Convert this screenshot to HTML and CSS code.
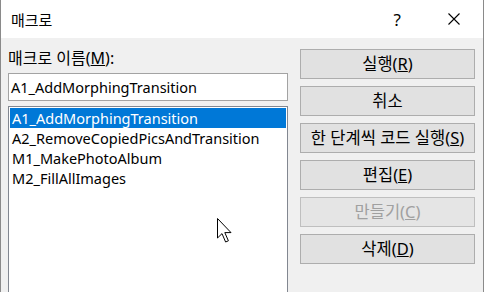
FILE: index.html
```html
<!DOCTYPE html>
<html lang="ko">
<head>
  <meta charset="UTF-8" />
  <title>매크로</title>
  <link rel="stylesheet" href="styles.css">
</head>
<body>

  <div class="dialog">
    <div class="titlebar">
      <span class="title">매크로</span>
      <span class="help">?</span>
      <svg class="close" width="12" height="12" viewBox="0 0 12 12">
        <path d="M0.5 0.5 L11.5 11.5 M11.5 0.5 L0.5 11.5" stroke="#000" stroke-width="1.1" fill="none"/>
      </svg>
    </div>

    <div class="content">
      <div class="left">
        <div class="label">매크로 이름(<u>M</u>):</div>
        <div class="name-box">A1_AddMorphingTransition</div>
        <ul class="macro-list">
          <li class="selected">A1_AddMorphingTransition</li>
          <li>A2_RemoveCopiedPicsAndTransition</li>
          <li>M1_MakePhotoAlbum</li>
          <li>M2_FillAllImages</li>
        </ul>
      </div>

      <div class="buttons">
        <div class="btn">실행(<u>R</u>)</div>
        <div class="btn">취소</div>
        <div class="btn">한 단계씩 코드 실행(<u>S</u>)</div>
        <div class="btn">편집(<u>E</u>)</div>
        <div class="btn disabled">만들기(<u>C</u>)</div>
        <div class="btn">삭제(<u>D</u>)</div>
      </div>
    </div>

    <!-- курсор мыши поверх списка -->
    <svg class="cursor" width="16" height="26" viewBox="0 0 16 26">
      <path d="M0.5 0.5 L0.5 20 L5 15.6 L8.6 24 L11.4 22.8 L7.8 14.6 L14 14.6 Z" fill="#fff" stroke="#000" stroke-width="1" stroke-linejoin="miter"/>
    </svg>
  </div>

</body>
</html>
```

FILE: styles.css
```css
body {
  margin: 0;
  width: 484px;
  height: 292px;
  overflow: hidden;
  font-family: 'Noto Sans', 'Noto Sans CJK KR', sans-serif;
  font-size: 16px;
  color: #000;
  background: #f0f0f0;
}

.dialog {
  position: relative;
  width: 484px;
  height: 292px;
  box-sizing: border-box;
  border-left: 1px solid #8a8a8a;
  border-right: 1px solid #8a8a8a;
  background: #f0f0f0;
  overflow: hidden;
}

.titlebar {
  height: 38px;
  background: #fff;
  display: flex;
  align-items: center;
  padding-left: 10px;
}

.title {
  font-size: 15px;
  flex: 1;
}

.help {
  font-size: 17px;
  margin-right: 47px;
}

.close {
  margin-right: 23px;
}

.content {
  display: flex;
  gap: 12px;
  padding: 11px 0 0 7px;
}

.left {
  width: 280px;
}

.label {
  height: 19px;
  line-height: 19px;
  font-size: 16px;
}

.name-box {
  margin-top: 5px;
  height: 28px;
  box-sizing: border-box;
  border: 1px solid #a3a3a3;
  background: #fff;
  padding: 0 2px;
  line-height: 26px;
  font-size: 14.5px;
}

.macro-list {
  list-style: none;
  margin: 5px 0 0;
  padding: 1px;
  height: 200px;
  border: 1px solid #828790;
  background: #fff;
}

.macro-list li {
  height: 20px;
  line-height: 20px;
  padding-left: 2px;
  font-size: 14.5px;
  white-space: nowrap;
}

.macro-list li.selected {
  background: #0078d7;
  color: #fff;
}

.buttons {
  width: 175px;
  display: flex;
  flex-direction: column;
  gap: 7px;
}

.btn {
  height: 30px;
  box-sizing: border-box;
  border: 1px solid #adadad;
  background: #e1e1e1;
  text-align: center;
  line-height: 28px;
  font-size: 16.5px;
}

.btn.disabled {
  color: #a0a0a0;
  border-color: #bfbfbf;
  background: #e5e5e5;
}

.cursor {
  position: absolute;
  left: 216px;
  top: 218px;
}
```
